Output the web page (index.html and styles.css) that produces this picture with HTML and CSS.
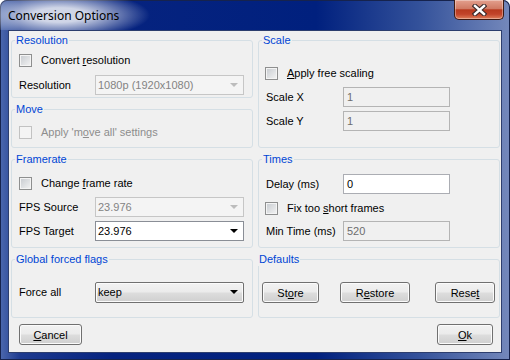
FILE: index.html
```html
<!DOCTYPE html>
<html lang="en">
<head>
    <meta charset="UTF-8">
    <title>Conversion Options</title>
    <link rel="stylesheet" href="styles.css">
</head>
<body>
    <div class="window">
        <div class="titlebar">
            <span class="title">Conversion Options</span>
            <button class="close" type="button" aria-label="Close">
                <svg width="15" height="12" viewBox="0 0 15 12">
                    <path d="M3 2 L12 10 M12 2 L3 10" stroke="#3b2a2a" stroke-width="4.6" stroke-linecap="square" fill="none"/>
                    <path d="M3 2 L12 10 M12 2 L3 10" stroke="#fff" stroke-width="2.4" stroke-linecap="square" fill="none"/>
                </svg>
            </button>
        </div>

        <div class="client">
            <div class="groups">
                <div class="stack">
                    <fieldset class="group group-resolution">
                        <legend>Resolution</legend>
                        <div class="check"><span class="box"></span><span>Convert <u>r</u>esolution</span></div>
                        <div class="row">
                            <span class="label">Resolution</span>
                            <div class="combo disabled"><span>1080p (1920x1080)</span><span class="arrow"></span></div>
                        </div>
                    </fieldset>
                    <fieldset class="group group-move">
                        <legend>Move</legend>
                        <div class="check disabled"><span class="box"></span><span>Apply 'm<u>o</u>ve all' settings</span></div>
                    </fieldset>
                </div>

                <fieldset class="group group-right group-scale">
                    <legend>Scale</legend>
                    <div class="check"><span class="box"></span><span><u>A</u>pply free scaling</span></div>
                    <div class="row">
                        <span class="label">Scale X</span>
                        <div class="field disabled">1</div>
                    </div>
                    <div class="row">
                        <span class="label">Scale Y</span>
                        <div class="field disabled">1</div>
                    </div>
                </fieldset>

                <fieldset class="group group-framerate">
                    <legend>Framerate</legend>
                    <div class="check"><span class="box"></span><span>Change <u>f</u>rame rate</span></div>
                    <div class="row">
                        <span class="label">FPS Source</span>
                        <div class="combo disabled"><span>23.976</span><span class="arrow"></span></div>
                    </div>
                    <div class="row">
                        <span class="label">FPS Target</span>
                        <div class="combo"><span>23.976</span><span class="arrow"></span></div>
                    </div>
                </fieldset>

                <fieldset class="group group-right group-times">
                    <legend>Times</legend>
                    <div class="row">
                        <span class="label">Delay (ms)</span>
                        <div class="field">0</div>
                    </div>
                    <div class="check"><span class="box"></span><span>Fix too <u>s</u>hort frames</span></div>
                    <div class="row">
                        <span class="label">Min Time (ms)</span>
                        <div class="field disabled">520</div>
                    </div>
                </fieldset>

                <fieldset class="group group-flags">
                    <legend>Global forced flags</legend>
                    <div class="row">
                        <span class="label">Force all</span>
                        <div class="combo combo-button"><span>keep</span><span class="arrow"></span></div>
                    </div>
                </fieldset>

                <fieldset class="group group-right group-defaults">
                    <legend>Defaults</legend>
                    <div class="defaults-row">
                        <button class="btn btn-store" type="button">St<u>o</u>re</button>
                        <button class="btn btn-restore" type="button">R<u>e</u>store</button>
                        <button class="btn btn-reset" type="button">Rese<u>t</u></button>
                    </div>
                </fieldset>
            </div>

            <div class="actions">
                <button class="btn btn-cancel" type="button"><u>C</u>ancel</button>
                <button class="btn btn-ok" type="button"><u>O</u>k</button>
            </div>
        </div>
    </div>
</body>
</html>
```

FILE: styles.css
```css
* {
    box-sizing: border-box;
}
body {
    margin: 0;
    font-family: "Liberation Sans", Arial, sans-serif;
    font-size: 11px;
    color: #000;
    background: #fff;
}
.window {
    width: 510px;
    height: 360px;
    padding-bottom: 7px;
    display: flex;
    flex-direction: column;
    border-radius: 7px 7px 0 0;
    background: linear-gradient(90deg, #4c68ad 0%, #1d3a8f 4%, #06237f 22%, #00207e 62%, #33519a 82%, #7488bb 100%);
    box-shadow: inset 0 0 0 1px #16234d;
}
.titlebar {
    height: 30px;
    display: flex;
    align-items: flex-start;
}
.title {
    font: 12px/16px "Noto Sans", "Liberation Sans", sans-serif;
    padding: 8px 40px 6px 8px;
    background: radial-gradient(ellipse 90px 24px at 60px 15px, rgba(255, 255, 255, 0.8) 30%, rgba(255, 255, 255, 0) 100%);
}
.close {
    margin-left: auto;
    margin-right: 6px;
    width: 50px;
    height: 20px;
    padding: 0;
    display: flex;
    align-items: center;
    justify-content: center;
    border: 1px solid #3e1a12;
    border-top: 0;
    border-radius: 0 0 5px 5px;
    background: linear-gradient(#e3a08e, #d07a64 45%, #b83a1f 52%, #c2442a 75%, #de7e5a 100%);
    box-shadow: inset 0 0 0 1px rgba(255, 255, 255, 0.35);
}
.client {
    flex: 1;
    margin: 0 8px;
    border: 1px solid #2d3e6e;
    background: #f0f0f0;
    padding: 3px 1px 0 2px;
    display: flex;
    flex-direction: column;
}
.groups {
    display: grid;
    grid-template-columns: 242px 242px;
    grid-template-rows: 114px 95px 65px;
    gap: 5px;
}
.stack {
    display: flex;
    flex-direction: column;
    gap: 5px;
}
.group {
    margin: 0;
    min-width: 0;
    border: 1px solid #d5dfe5;
    border-radius: 3px;
    padding: 0 6px 0 7px;
}
.group legend {
    padding: 0 1px;
    margin-left: -4px;
    color: #0046d5;
    line-height: 13px;
}
.group-resolution {
    height: 64px;
    padding-top: 3px;
}
.group-move {
    height: 45px;
    padding-top: 6px;
}
.group-scale {
    padding-top: 16px;
}
.group-framerate {
    padding-top: 7px;
}
.group-times {
    padding-top: 8px;
}
.group-flags {
    padding-top: 16px;
}
.group-defaults {
    padding: 16px 4px 0 3px;
}
.check {
    display: flex;
    align-items: center;
    height: 20px;
}
.check.disabled {
    color: #8d8d8d;
}
.box {
    width: 13px;
    height: 13px;
    margin-right: 9px;
    border: 1px solid #8e8f8f;
    background: linear-gradient(135deg, #c6cacf, #f4f4f4);
    box-shadow: inset 0 0 0 1px #f4f4f4;
}
.check.disabled .box {
    border-color: #c2c2c2;
    background: #f4f4f4;
    box-shadow: none;
}
.group-right .check {
    margin-left: -1px;
}
.row {
    display: flex;
    align-items: center;
    height: 20px;
}
.group-resolution .row {
    margin-top: 5px;
}
.group-scale .row,
.group-framerate .row {
    margin-top: 4px;
}
.group-times .check {
    margin-top: 4px;
}
.group-times .row + .check + .row {
    margin-top: 3px;
}
.label {
    width: 76px;
    flex: none;
}
.group-right .label {
    width: 77px;
}
.combo {
    display: flex;
    align-items: center;
    width: 149px;
    height: 20px;
    padding-left: 2px;
    border: 1px solid #8a8e96;
    background: #fff;
}
.combo.disabled {
    color: #838383;
    background: #f4f4f4;
    border-color: #c6c6c6;
}
.combo-button {
    height: 21px;
    border-color: #707070;
    border-radius: 2px;
    background: linear-gradient(#f2f2f2 0%, #ebebeb 48%, #dddddd 52%, #cfcfcf 100%);
    box-shadow: inset 0 0 0 1px #fbfbfb;
}
.arrow {
    margin-left: auto;
    margin-right: 5px;
    border-left: 4px solid transparent;
    border-right: 4px solid transparent;
    border-top: 4px solid #000;
}
.combo.disabled .arrow {
    border-top-color: #bcbcbc;
}
.field {
    display: flex;
    align-items: center;
    width: 107px;
    height: 20px;
    padding-left: 3px;
    border: 1px solid #abadb3;
    background: #fff;
}
.field.disabled {
    color: #6d6d6d;
    background: #f0f0f0;
    border-color: #b4b4b4;
}
.btn {
    font: inherit;
    color: #000;
    height: 21px;
    padding: 0;
    border: 1px solid #707070;
    border-radius: 3px;
    background: linear-gradient(#f2f2f2 0%, #ebebeb 48%, #dddddd 52%, #cfcfcf 100%);
    box-shadow: inset 0 0 0 1px #fbfbfb;
}
.defaults-row {
    display: flex;
}
.btn-store {
    width: 57px;
    margin-right: 21px;
}
.btn-restore {
    width: 70px;
}
.btn-reset {
    width: 60px;
    margin-left: auto;
}
.actions {
    display: flex;
    justify-content: space-between;
    margin-top: 6px;
    padding: 0 7px 0 8px;
}
.btn-cancel {
    width: 63px;
}
.btn-ok {
    width: 56px;
}
```
